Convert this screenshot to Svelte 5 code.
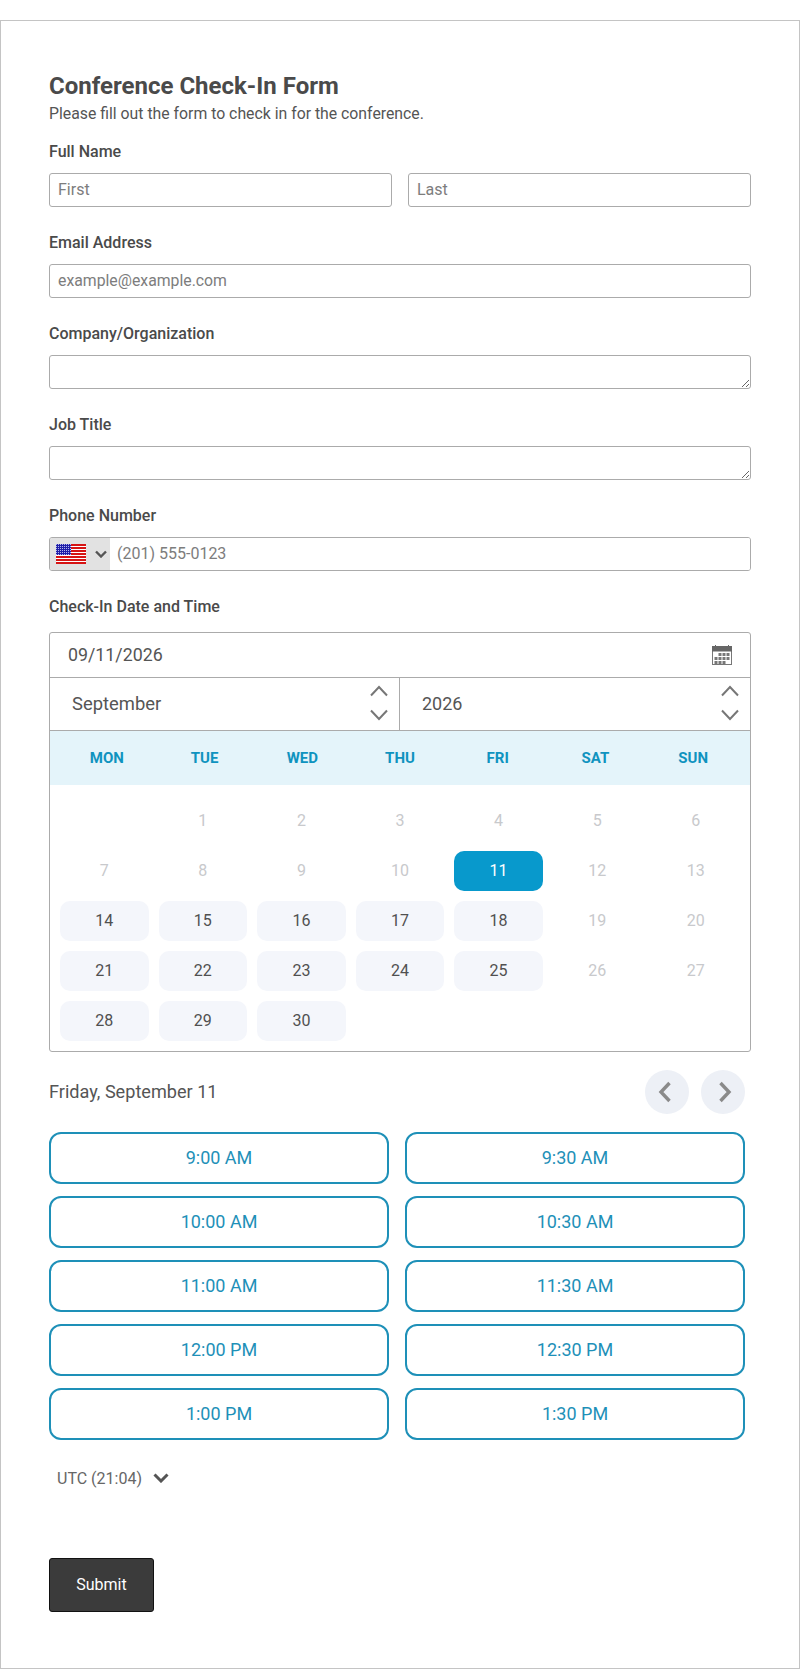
<script>
  const days = ["MON", "TUE", "WED", "THU", "FRI", "SAT", "SUN"];
  const disabled = [1, 2, 3, 4, 5, 6, 7, 8, 9, 10, 12, 13, 19, 20, 26, 27];
  const selected = 11;
  const cells = [null, ...Array.from({ length: 30 }, (_, i) => i + 1)];
  const slots = [
    "9:00 AM", "9:30 AM",
    "10:00 AM", "10:30 AM",
    "11:00 AM", "11:30 AM",
    "12:00 PM", "12:30 PM",
    "1:00 PM", "1:30 PM"
  ];
  const stripes = [0, 1, 2, 3, 4, 5, 6];
  const calCols = [0, 1, 2, 3];
  const calRows = [0, 1, 2];
</script>

<form class="card" onsubmit={(e) => e.preventDefault()}>
  <h1>Conference Check-In Form</h1>
  <p class="intro">Please fill out the form to check in for the conference.</p>

  <div class="field">
    <span class="label">Full Name</span>
    <div class="name-row">
      <input class="text-input" placeholder="First" />
      <input class="text-input" placeholder="Last" />
    </div>
  </div>

  <div class="field">
    <span class="label">Email Address</span>
    <input class="text-input email" placeholder="example@example.com" />
  </div>

  <div class="field">
    <span class="label">Company/Organization</span>
    <textarea class="text-input area"></textarea>
  </div>

  <div class="field">
    <span class="label">Job Title</span>
    <textarea class="text-input area"></textarea>
  </div>

  <div class="field">
    <span class="label">Phone Number</span>
    <div class="phone">
      <div class="country">
        <svg class="flag" width="30" height="20" viewBox="0 0 30 20">
          <defs>
            <pattern id="stars" width="2" height="2" patternUnits="userSpaceOnUse">
              <rect width="2" height="2" fill="#1f1fa8" />
              <rect width="1" height="1" fill="#b4b4ec" />
            </pattern>
          </defs>
          <rect width="30" height="20" fill="#fff" />
          {#each stripes as s}
            <rect y={s * 3} width="30" height="2" fill="#d61414" />
          {/each}
          <rect width="15" height="11" fill="url(#stars)" />
        </svg>
        <svg width="12" height="8" viewBox="0 0 12 8">
          <path d="M1 1.500 6 6.500l5-5" fill="none" stroke="#555" stroke-width="2.400" />
        </svg>
      </div>
      <input placeholder="(201) 555-0123" />
    </div>
  </div>

  <div class="field datetime">
    <span class="label">Check-In Date and Time</span>
    <div class="calendar">
      <div class="date-row">
        <span class="date-value">09/11/2026</span>
        <svg width="20" height="20" viewBox="0 0 20 20">
          <rect x="0.500" y="1.500" width="19" height="18" fill="#fff" stroke="#777" />
          <path d="M0 1h3V0h1v1h12V0h1v1h3v5.500H0z" fill="#666" />
          {#each calRows as r}
            {#each calCols as c}
              {#if !(r === 0 && c === 0) && !(r === 2 && c === 3)}
                <rect x={2.500 + c * 4} y={8 + r * 4} width="3" height="3" fill="#777" />
              {/if}
            {/each}
          {/each}
        </svg>
      </div>
      <div class="select-row">
        <div class="picker month">
          <span>September</span>
          <div class="stepper">
            <svg width="18" height="12" viewBox="0 0 18 12"><path d="M1 10.500 9 2l8 8.500" /></svg>
            <svg width="18" height="12" viewBox="0 0 18 12"><path d="M1 1.500 9 10l8-8.500" /></svg>
          </div>
        </div>
        <div class="picker year">
          <span>2026</span>
          <div class="stepper">
            <svg width="18" height="12" viewBox="0 0 18 12"><path d="M1 10.500 9 2l8 8.500" /></svg>
            <svg width="18" height="12" viewBox="0 0 18 12"><path d="M1 1.500 9 10l8-8.500" /></svg>
          </div>
        </div>
      </div>
      <div class="weekdays">
        {#each days as d}
          <span>{d}</span>
        {/each}
      </div>
      <div class="days">
        {#each cells as n}
          {#if n === null}
            <span></span>
          {:else}
            <span
              class="day"
              class:off={disabled.includes(n)}
              class:on={n === selected}
            >{n}</span>
          {/if}
        {/each}
      </div>
    </div>
  </div>

  <div class="slot-head">
    <span class="slot-title">Friday, September 11</span>
    <div class="nav">
      <button type="button" class="round" aria-label="Previous day">
        <svg width="18" height="22" viewBox="0 0 18 22"><path d="M11.500 2 3 11l8.500 9" /></svg>
      </button>
      <button type="button" class="round" aria-label="Next day">
        <svg width="18" height="22" viewBox="0 0 18 22"><path d="M6.500 2l8.500 9-8.500 9" /></svg>
      </button>
    </div>
  </div>

  <div class="slots">
    {#each slots as t}
      <button type="button" class="slot">{t}</button>
    {/each}
  </div>

  <div class="zone">
    <span>UTC (21:04)</span>
    <svg width="16" height="10" viewBox="0 0 16 10">
      <path d="M1.500 1.500 8 8l6.500-6.500" fill="none" stroke="#555" stroke-width="3" />
    </svg>
  </div>

  <button type="submit" class="submit">Submit</button>
</form>

<style>
  :global(body) {
    margin: 0;
    background: #fff;
  }

  .card {
    box-sizing: border-box;
    width: 800px;
    height: 1649px;
    margin-top: 20px;
    padding: 51px 48px 0;
    border: 1px solid #c4c4c4;
    font-family: Roboto, "Liberation Sans", sans-serif;
    color: #555;
  }

  h1 {
    margin: 0;
    font-size: 24px;
    line-height: 28px;
    font-weight: 700;
    color: #4a4a4a;
  }

  .intro {
    margin: 0;
    font-size: 15.800px;
    line-height: 28px;
  }

  .field {
    width: 702px;
    margin-bottom: 26px;
  }

  .label {
    display: block;
    margin-top: 14px;
    margin-bottom: 11px;
    font-size: 16px;
    line-height: 20px;
    font-weight: 500;
    color: #4a4a4a;
  }

  .field + .field .label {
    margin-top: 0;
  }

  .name-row {
    display: flex;
    gap: 16px;
  }

  .text-input {
    display: block;
    box-sizing: border-box;
    width: 100%;
    height: 34px;
    min-width: 0;
    padding: 0 8px 1px;
    border: 1px solid #ababab;
    border-radius: 3px;
    font: 16px Roboto, sans-serif;
    color: #444;
    background: #fff;
    outline: none;
  }

  .email {
    font-size: 15.800px;
  }

  .area {
    margin: 0;
    resize: vertical;
  }

  input::placeholder {
    color: #7d7d7d;
    opacity: 1;
  }

  .phone {
    display: flex;
    height: 34px;
    box-sizing: border-box;
    border: 1px solid #ababab;
    border-radius: 3px;
    overflow: hidden;
  }

  .country {
    display: flex;
    align-items: center;
    gap: 9px;
    width: 60px;
    padding-left: 6px;
    box-sizing: border-box;
    background: #e2e2e2;
  }

  .flag {
    flex: none;
  }

  .phone input {
    flex: 1;
    border: 0;
    padding: 0 7px 1px;
    font: 16px Roboto, sans-serif;
    outline: none;
  }

  .datetime {
    margin-bottom: 0;
  }

  .datetime .label {
    margin-bottom: 15px;
  }

  .calendar {
    border: 1px solid #ababab;
    border-radius: 3px;
    overflow: hidden;
  }

  .date-row {
    display: flex;
    align-items: center;
    justify-content: space-between;
    height: 44px;
    padding: 0 18px;
    border-bottom: 1px solid #ababab;
    font-size: 17.800px;
  }

  .date-value {
    padding-bottom: 2px;
  }

  .select-row {
    display: flex;
    height: 52px;
    border-bottom: 1px solid #ababab;
    font-size: 18px;
  }

  .picker {
    display: flex;
    align-items: center;
    justify-content: space-between;
    box-sizing: border-box;
  }

  .month {
    width: 350px;
    padding: 0 11px 2px 22px;
    border-right: 1px solid #ababab;
    font-size: 18.400px;
  }

  .year {
    flex: 1;
    padding: 0 11px 2px 22px;
  }

  .stepper {
    display: flex;
    flex-direction: column;
    gap: 12px;
  }

  .stepper svg {
    display: block;
  }

  .stepper path {
    fill: none;
    stroke: #777;
    stroke-width: 2;
  }

  .weekdays {
    display: grid;
    grid-template-columns: repeat(7, 1fr);
    align-items: center;
    height: 54px;
    padding: 0 8px;
    background: #e4f4fa;
    font-size: 15px;
    font-weight: 700;
    color: #0f93bf;
    text-align: center;
  }

  .days {
    display: grid;
    grid-template-columns: repeat(7, 1fr);
    grid-auto-rows: 40px;
    gap: 10px;
    padding: 16px 10px 10px;
  }

  .day {
    display: flex;
    align-items: center;
    justify-content: center;
    box-sizing: border-box;
    padding-bottom: 2px;
    border-radius: 10px;
    background: #f4f6fb;
    font-size: 16px;
    color: #505050;
  }

  .day.off {
    background: transparent;
    color: #c8c9cc;
  }

  .day.on {
    background: #0899cc;
    color: #fff;
  }

  .slot-head {
    display: flex;
    align-items: center;
    justify-content: space-between;
    width: 696px;
    margin-top: 18px;
    font-size: 18.100px;
  }

  .slot-title {
    padding-bottom: 2px;
  }

  .nav {
    display: flex;
    gap: 12px;
  }

  .round {
    display: flex;
    align-items: center;
    justify-content: center;
    width: 44px;
    height: 44px;
    padding: 0;
    border: 0;
    border-radius: 50%;
    background: #edf0f6;
  }

  .round path {
    fill: none;
    stroke: #8a8a8a;
    stroke-width: 3.400;
  }

  .slots {
    display: grid;
    grid-template-columns: 340px 340px;
    grid-auto-rows: 52px;
    gap: 12px 16px;
    margin-top: 18px;
  }

  .slot {
    padding: 0 0 2px;
    border: 2px solid #1e90b8;
    border-radius: 12px;
    background: #fff;
    font: 18px Roboto, sans-serif;
    color: #1e90b8;
  }

  .zone {
    display: flex;
    align-items: center;
    gap: 11px;
    height: 24px;
    margin-top: 26px;
    padding-left: 8px;
    font-size: 16px;
    color: #666;
  }

  .submit {
    display: block;
    width: 105px;
    height: 54px;
    margin-top: 68px;
    padding: 0 0 2px;
    border: 1px solid #111;
    border-radius: 3px;
    background: #3b3b3b;
    font: 16px Roboto, sans-serif;
    color: #fff;
  }
</style>
